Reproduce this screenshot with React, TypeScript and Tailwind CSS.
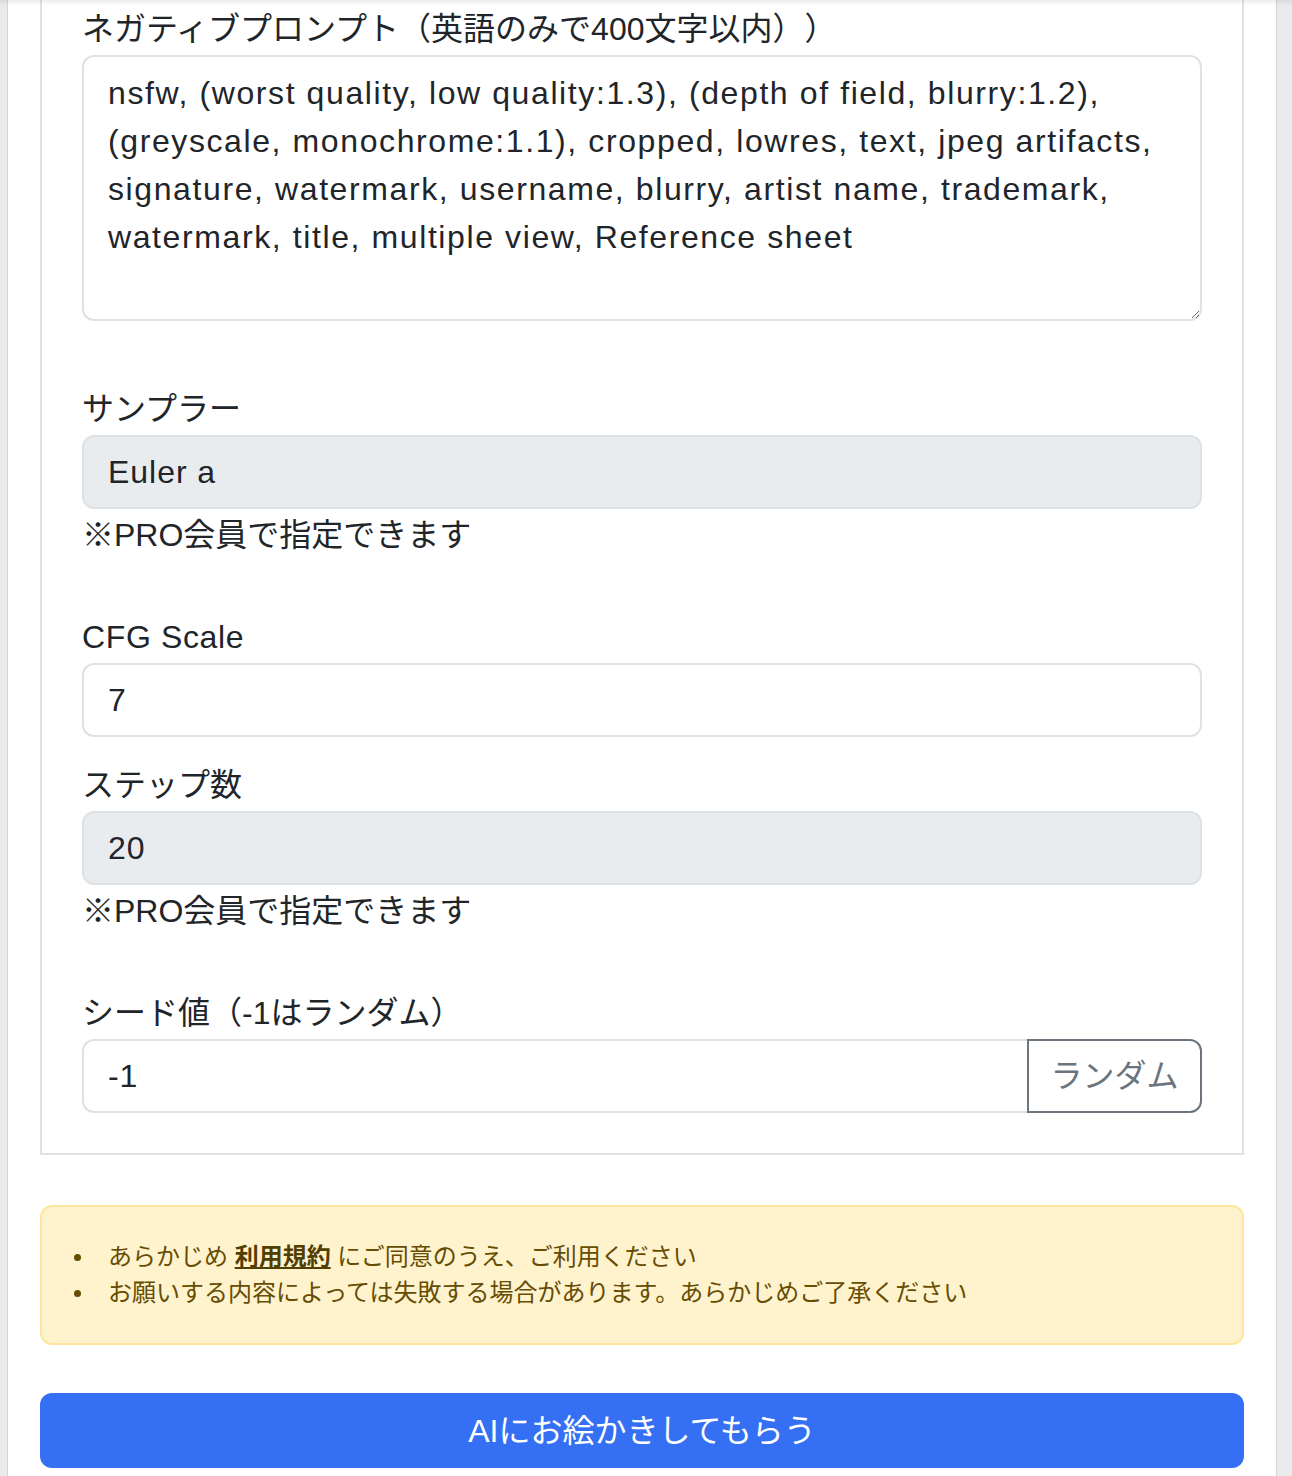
import React from "react";

const negative =
  "nsfw, (worst quality, low quality:1.3), (depth of field, blurry:1.2), (greyscale, monochrome:1.1), cropped, lowres, text, jpeg artifacts, signature, watermark, username, blurry, artist name, trademark, watermark, title, multiple view, Reference sheet";

const font = { fontFamily: '"Liberation Sans", "Noto Sans CJK JP", sans-serif' };

function Label({ children, className = "" }: { children: React.ReactNode; className?: string }) {
  return (
    <label
      className={`block text-[32px] leading-[48px] text-[#212529] mb-[2px] [text-spacing-trim:space-all] ${className}`}
    >
      {children}
    </label>
  );
}

function Help({ children }: { children: React.ReactNode }) {
  return <div className="text-[32px] leading-[48px] text-[#212529] mt-[2px]">{children}</div>;
}

function TextInput({ value, disabled = false }: { value: string; disabled?: boolean }) {
  return (
    <input
      readOnly
      value={value}
      className={`block w-full h-[74px] rounded-[12px] border-2 border-[#dee2e6] px-[24px] text-[32px] leading-[48px] tracking-[0.03em] text-[#212529] outline-none ${
        disabled ? "bg-[#e9ecef]" : "bg-white"
      }`}
    />
  );
}

function Bullet({ children }: { children: React.ReactNode }) {
  return (
    <li className="flex items-center">
      <span className="mr-[27px] h-[7px] w-[7px] shrink-0 rounded-full bg-[#664d03]" />
      <span>{children}</span>
    </li>
  );
}

export default function App() {
  return (
    <div className="relative flex min-h-[1476px] bg-white overflow-hidden" style={font}>
      <div className="w-[8px] shrink-0 bg-[#e9eaec] border-r border-[#d3d4d6]" />
      <main className="flex-1 px-[32px]">
        <div className="border-2 border-t-0 border-[#dee2e6] px-[40px] pt-[5px] pb-[40px]">
          <Label className="mb-0">ネガティブプロンプト（英語のみで400文字以内））</Label>
          <textarea
            readOnly
            value={negative}
            className="block w-full h-[266px] rounded-[12px] border-2 border-[#dee2e6] bg-white px-[24px] py-[12px] text-[32px] leading-[48px] tracking-[0.05em] text-[#212529] outline-none"
          />

          <div className="mt-[64px]">
            <Label>サンプラー</Label>
            <TextInput value="Euler a" disabled />
            <Help>※PRO会員で指定できます</Help>
          </div>

          <div className="mt-[54px]">
            <Label className="tracking-[0.02em]">CFG Scale</Label>
            <TextInput value="7" />
          </div>

          <div className="mt-[24px]">
            <Label>ステップ数</Label>
            <TextInput value="20" disabled />
            <Help>※PRO会員で指定できます</Help>
          </div>

          <div className="mt-[54px]">
            <Label>シード値（-1はランダム）</Label>
            <div className="flex h-[74px]">
              <input
                readOnly
                value="-1"
                className="flex-1 min-w-0 h-full rounded-l-[12px] border-2 border-r-0 border-[#dee2e6] bg-white px-[24px] text-[32px] leading-[48px] tracking-[0.03em] text-[#212529] outline-none"
              />
              <button
                type="button"
                className="h-full w-[175px] shrink-0 rounded-r-[12px] border-2 border-[#6c757d] bg-white text-[32px] leading-[48px] text-[#6c757d]"
              >
                ランダム
              </button>
            </div>
          </div>
        </div>

        <div className="mt-[50px] rounded-[12px] border-2 border-[#ffe69c] bg-[#fff3cd] p-[32px] text-[24px] leading-[36px] text-[#664d03]">
          <ul>
            <Bullet>
              あらかじめ{" "}
              <a href="#" className="font-bold underline text-[#523e02]">
                利用規約
              </a>{" "}
              にご同意のうえ、ご利用ください
            </Bullet>
            <Bullet>お願いする内容によっては失敗する場合があります。あらかじめご了承ください</Bullet>
          </ul>
        </div>

        <button
          type="button"
          className="mt-[48px] block w-full h-[75px] rounded-[12px] bg-[#346ff4] text-white text-[32px] leading-[48px]"
        >
          AIにお絵かきしてもらう
        </button>
      </main>
      <div className="w-[16px] shrink-0 bg-[#ebebed] border-l border-[#d3d4d6]" />
      <div className="pointer-events-none absolute left-0 right-0 top-0 h-[6px] bg-gradient-to-b from-black/[0.07] to-transparent" />
    </div>
  );
}
